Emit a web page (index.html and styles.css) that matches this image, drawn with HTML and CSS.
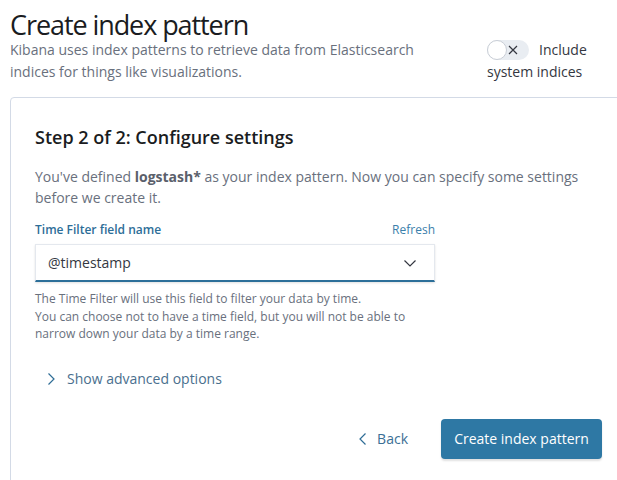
FILE: index.html
```html
<!DOCTYPE html>
<html>
<head>
<meta charset="utf-8">
<link rel="stylesheet" href="styles.css">
</head>
<body>
<div class="page">
  <header class="header">
    <h1 class="title">Create index pattern</h1>
    <div class="header-row">
      <p class="desc">Kibana uses index patterns to retrieve data from Elasticsearch indices for things like visualizations.</p>
      <label class="toggle">
        <span class="switch">
          <span class="knob"></span>
          <svg class="switch-x" width="12" height="12" viewBox="0 0 12 12"><path d="M2 2 L10 10 M10 2 L2 10" stroke="#343741" stroke-width="1.2" fill="none"/></svg>
        </span>
        <span class="toggle-label">Include system indices</span>
      </label>
    </div>
  </header>

  <section class="panel">
    <h2 class="step-title">Step 2 of 2: Configure settings</h2>
    <p class="intro">You've defined <b class="strong">logstash*</b> as your index pattern. Now you can specify some settings before we create it.</p>

    <div class="field">
      <div class="field-head">
        <span class="field-label">Time Filter field name</span>
        <span class="field-link">Refresh</span>
      </div>
      <div class="select">
        <span class="select-value">@timestamp</span>
        <svg class="select-arrow" width="16" height="16" viewBox="0 0 16 16"><path d="M2.5 5.5 L8 11 L13.5 5.5" stroke="#343741" stroke-width="1.2" fill="none"/></svg>
      </div>
      <p class="help">The Time Filter will use this field to filter your data by time.<br>You can choose not to have a time field, but you will not be able to narrow down your data by a time range.</p>
    </div>

    <div class="advanced">
      <svg width="12" height="14" viewBox="0 0 12 14"><path d="M3.5 1.5 L9 7 L3.5 12.5" stroke="#2f6d96" stroke-width="1.2" fill="none"/></svg>
      <span>Show advanced options</span>
    </div>

    <div class="actions">
      <button class="btn-back">
        <svg width="12" height="14" viewBox="0 0 12 14"><path d="M8.5 1.5 L3 7 L8.5 12.5" stroke="#2f6d96" stroke-width="1.2" fill="none"/></svg>
        <span>Back</span>
      </button>
      <button class="btn-primary">Create index pattern</button>
    </div>
  </section>
</div>
</body>
</html>
```

FILE: styles.css
```css
html, body {
  margin: 0;
  padding: 0;
  background: #ffffff;
  overflow: hidden;
}
body {
  font-family: "Open Sans", "Noto Sans", sans-serif;
  color: #343741;
}
.page {
  width: 617px;
  padding: 0 0 0 10px;
  box-sizing: border-box;
}
.header {
  padding-top: 11px;
}
.title {
  margin: 0;
  font-size: 27px;
  font-weight: 400;
  line-height: 28px;
  letter-spacing: -0.04em;
  color: #1a1c21;
}
.header-row {
  display: flex;
  align-items: flex-start;
}
.desc {
  margin: 0;
  width: 440px;
  font-size: 14px;
  line-height: 22px;
  color: #69707d;
}
.toggle {
  margin-left: 37px;
  width: 110px;
  font-size: 14px;
  line-height: 22px;
  color: #343741;
}
.switch {
  float: left;
  position: relative;
  width: 42px;
  height: 20px;
  margin-top: 1px;
  margin-right: 10px;
  border-radius: 10px;
  background: #e9edf2;
}
.knob {
  position: absolute;
  left: 0;
  top: 0;
  width: 18px;
  height: 18px;
  border-radius: 50%;
  background: #fff;
  border: 1px solid #c9ced6;
}
.switch-x {
  position: absolute;
  left: 20px;
  top: 4px;
}
.panel {
  margin-top: 14px;
  width: 617px;
  border: 1px solid #d3dae6;
  border-radius: 4px;
  padding: 25px 24px 24px 24px;
  box-sizing: border-box;
  min-height: 400px;
}
.step-title {
  margin: 0;
  font-size: 18px;
  font-weight: 600;
  line-height: 28px;
  color: #1a1c21;
}
.intro {
  margin: 15px 0 0 0;
  font-size: 14px;
  line-height: 21px;
  color: #69707d;
  width: 560px;
}
.strong {
  color: #5a606b;
  font-weight: 700;
}
.field {
  margin-top: 13px;
  width: 400px;
}
.field-head {
  display: flex;
  justify-content: space-between;
  align-items: baseline;
  font-size: 12px;
  line-height: 18px;
  margin-bottom: 6px;
}
.field-label {
  font-weight: 600;
  color: #2d6e98;
}
.field-link {
  color: #3b80ab;
}
.select {
  height: 38px;
  border: 1px solid #e4e8ee;
  border-bottom: 2px solid #2c6f99;
  box-shadow: 0 1px 2px rgba(0,0,0,0.12);
  display: flex;
  align-items: center;
  justify-content: space-between;
  padding: 0 16px 0 12px;
  font-size: 14px;
  color: #343741;
  box-sizing: border-box;
  margin-top: -1px;
}
.help {
  margin: 8px 0 0 0;
  font-size: 12px;
  line-height: 17.5px;
  color: #69707d;
}
.advanced {
  margin-top: 26px;
  padding-left: 10px;
  display: flex;
  align-items: center;
  gap: 10px;
  font-size: 14px;
  line-height: 20px;
  color: #4a6f8e;
}
.actions {
  margin-top: 30px;
  display: flex;
  justify-content: flex-end;
  align-items: center;
  gap: 25px;
}
.btn-back {
  display: flex;
  align-items: center;
  gap: 8px;
  border: none;
  background: none;
  font-family: inherit;
  font-size: 14px;
  color: #3b6f95;
  padding: 0;
  margin-right: 8px;
}
.btn-primary {
  height: 40px;
  width: 161px;
  border: none;
  border-radius: 4px;
  background: #2e78a4;
  color: #ffffff;
  font-family: inherit;
  font-size: 14px;
  box-shadow: 0 2px 2px rgba(0,0,0,0.12);
}
```
